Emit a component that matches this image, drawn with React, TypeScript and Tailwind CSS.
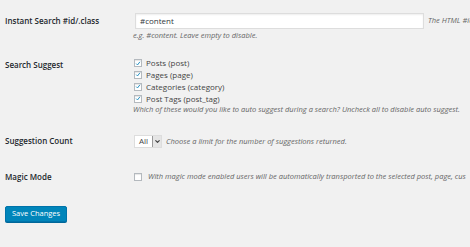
import { ChevronDown } from "lucide-react";

const font = "font-['Open_Sans','Liberation_Sans',sans-serif]";

const Check = ({ checked }: { checked?: boolean }) => (
  <span className="flex h-[8px] w-[8px] shrink-0 items-center justify-center border border-[#b4b9be] bg-white shadow-[inset_0_1px_1px_rgba(0,0,0,0.1)]">
    {checked && (
      <svg viewBox="0 0 10 10" className="h-[7px] w-[7px]">
        <path d="M2 5.2 L4.2 7.4 L8.2 2.2" fill="none" stroke="#1e8cbe" strokeWidth="1.6" />
      </svg>
    )}
  </span>
);

const types = ["Posts (post)", "Pages (page)", "Categories (category)", "Post Tags (post_tag)"];

export default function App() {
  return (
    <div className={`${font} h-[247px] w-[470px] overflow-hidden bg-[#f1f1f1] text-[#444]`}>
      <div className="pl-[5px] pt-[13px]">
        {/* Instant search */}
        <div className="flex">
          <div className="w-[128px] shrink-0 pt-[2px] text-[8px] font-semibold text-[#23282d]">Instant Search #id/.class</div>
          <div className="min-w-0 flex-1">
            <div className="flex items-center whitespace-nowrap">
              <div className="ml-[2px] flex h-[16px] w-[289px] shrink-0 items-center border border-[#ddd] bg-white pl-[4px] text-[8px] text-[#32373c] shadow-[inset_0_1px_2px_rgba(0,0,0,0.07)]">
                #content
              </div>
              <span className="ml-[4px] text-[7.5px] italic text-[#666]">The HTML #id</span>
            </div>
            <div className="mt-[1px] text-[7.5px] italic text-[#666]">e.g. #content. Leave empty to disable.</div>
          </div>
        </div>

        {/* Search suggest */}
        <div className="mt-[16px] flex">
          <div className="w-[128px] shrink-0 pt-[2px] text-[8px] font-semibold text-[#23282d]">Search Suggest</div>
          <div className="min-w-0 flex-1">
            {types.map((t) => (
              <div key={t} className="flex h-[11.8px] items-center gap-[4px] pl-[1px] text-[8px]">
                <Check checked />
                <span>{t}</span>
              </div>
            ))}
            <div className="whitespace-nowrap text-[7.5px] italic text-[#666]">
              Which of these would you like to auto suggest during a search? Uncheck all to disable auto suggest.
            </div>
          </div>
        </div>

        {/* Suggestion count */}
        <div className="mt-[19px] flex items-center">
          <div className="w-[128px] shrink-0 text-[8px] font-semibold text-[#23282d]">Suggestion Count</div>
          <div className="flex items-center whitespace-nowrap">
            <div className="ml-[1px] flex h-[13px] items-stretch border border-[#ddd] bg-white text-[8px]">
              <span className="flex items-center px-[4px]">All</span>
              <span className="flex w-[9px] items-center justify-center border-l border-[#999] bg-[#e5e5e5]">
                <ChevronDown className="h-[7px] w-[7px]" strokeWidth={4} />
              </span>
            </div>
            <span className="ml-[4px] text-[7.5px] italic text-[#666]">Choose a limit for the number of suggestions returned.</span>
          </div>
        </div>

        {/* Magic mode */}
        <div className="mt-[23px] flex items-center">
          <div className="w-[128px] shrink-0 text-[8px] font-semibold text-[#23282d]">Magic Mode</div>
          <div className="flex items-center gap-[6px] whitespace-nowrap pl-[1px]">
            <Check />
            <span className="text-[7.5px] italic text-[#666]">
              With magic mode enabled users will be automatically transported to the selected post, page, cus
            </span>
          </div>
        </div>

        <button className="mt-[23px] h-[16px] rounded-[2px] border border-[#0073aa] bg-[#0085ba] px-[6px] text-[7.5px] text-white shadow-[0_1px_0_#006799]">
          Save Changes
        </button>
      </div>
    </div>
  );
}
